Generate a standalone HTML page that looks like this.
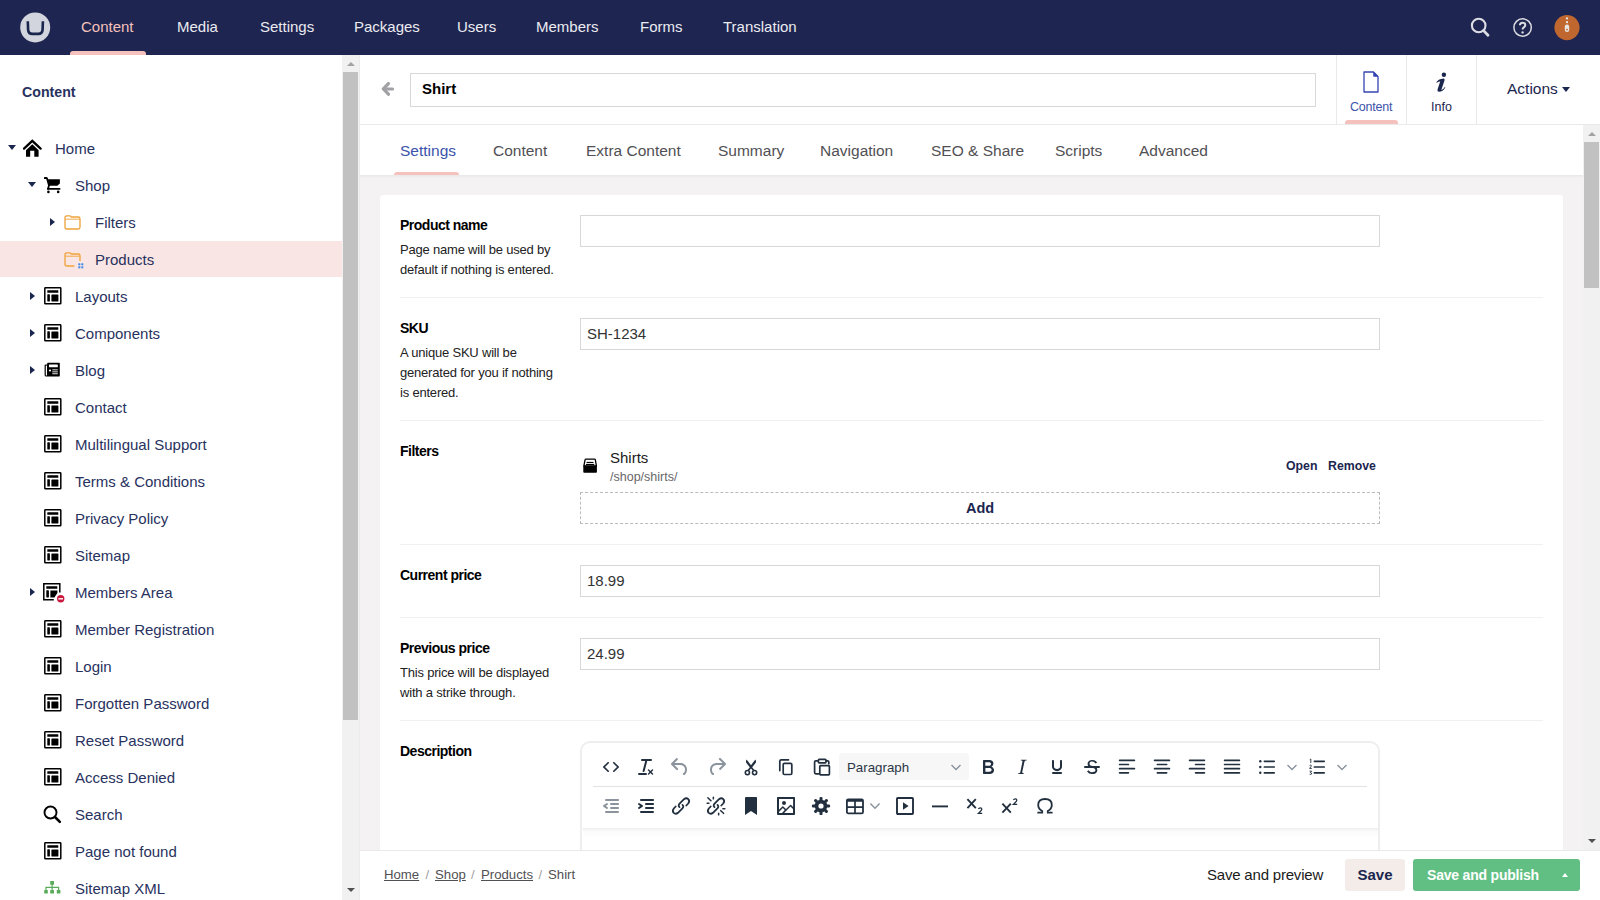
<!DOCTYPE html><html><head><meta charset="utf-8"><style>
*{box-sizing:border-box}
html,body{margin:0;padding:0}
body{width:1600px;height:900px;overflow:hidden;position:relative;background:#fff;font-family:"Liberation Sans",sans-serif;color:#1b264f}
.a{position:absolute}
.nav{position:absolute;top:18px;font-size:15px;color:#ebebf0;white-space:nowrap;line-height:18px}
.tt{position:absolute;font-size:15px;line-height:18px;color:#28325e;white-space:nowrap}
.cd{position:absolute;width:0;height:0;border-left:4px solid transparent;border-right:4px solid transparent;border-top:5px solid #1b264f}
.cr{position:absolute;width:0;height:0;border-top:4px solid transparent;border-bottom:4px solid transparent;border-left:5px solid #1b264f}
.tab{position:absolute;top:142px;font-size:15.5px;line-height:18px;color:#515054;white-space:nowrap}
.div{position:absolute;left:400px;width:1143px;height:1px;background:#f0eff1}
.lbl{position:absolute;left:400px;font-size:14px;letter-spacing:-0.5px;font-weight:bold;color:#000;line-height:18px;white-space:nowrap}
.desc{position:absolute;left:400px;font-size:13px;letter-spacing:-0.2px;line-height:20px;color:#222;white-space:nowrap}
.inp{position:absolute;left:580px;width:800px;height:32px;border:1px solid #d8d7d9;background:#fff}
.inp span{position:absolute;left:6px;top:6px;font-size:15px;line-height:18px;color:#333}
svg{display:block}
</style></head><body>
<div class="a" style="left:0;top:0;width:1600px;height:55px;background:#1e2550"></div>
<svg class="a" style="left:20px;top:12px" width="31" height="31" viewBox="0 0 31 31"><circle cx="15.2" cy="15.4" r="15" fill="#d2d5dd"/><path d="M7.8 9.3 L8.1 17.6 Q8.3 21.85 12.4 21.85 H18.3 Q22.4 21.85 22.6 17.6 L22.9 9.3" fill="none" stroke="#1b264f" stroke-width="2.6"/></svg>
<div class="a" style="left:70px;top:51px;width:76px;height:4px;background:#f5c1bc;border-radius:3px 3px 0 0"></div>
<div class="nav" style="left:81px;color:#f5c1bc">Content</div>
<div class="nav" style="left:177px;">Media</div>
<div class="nav" style="left:260px;">Settings</div>
<div class="nav" style="left:354px;">Packages</div>
<div class="nav" style="left:457px;">Users</div>
<div class="nav" style="left:536px;">Members</div>
<div class="nav" style="left:640px;">Forms</div>
<div class="nav" style="left:723px;">Translation</div>
<svg class="a" style="left:1469px;top:16px" width="22" height="23" viewBox="0 0 22 23"><circle cx="9.7" cy="9.5" r="6.8" fill="none" stroke="#dcdde3" stroke-width="2.1"/><path d="M14.6 14.6 L19 19.2" stroke="#dcdde3" stroke-width="2.8" stroke-linecap="round"/></svg>
<svg class="a" style="left:1511px;top:16px" width="23" height="23" viewBox="0 0 23 23"><circle cx="11.6" cy="11.5" r="8.7" fill="none" stroke="#dcdde3" stroke-width="1.5"/><path d="M8.9 9.3 Q8.9 6.7 11.6 6.7 Q14.3 6.7 14.3 9 Q14.3 10.4 12.8 11.3 Q11.6 12 11.6 13.6" fill="none" stroke="#dcdde3" stroke-width="2"/><circle cx="11.6" cy="16.4" r="1.2" fill="#dcdde3"/></svg>
<svg class="a" style="left:1554px;top:15px" width="26" height="26" viewBox="0 0 26 26"><circle cx="13" cy="12.6" r="12.6" fill="#c0672f"/><circle cx="13" cy="3.4" r="1.15" fill="#e8e4e4"/><circle cx="13" cy="7.2" r="1.15" fill="#e8e4e4"/><rect x="10.8" y="9.6" width="4.4" height="7.4" rx="2.2" fill="#e8e4e4"/><circle cx="13" cy="14.6" r="0.95" fill="#c0672f"/></svg>
<div class="tt" style="left:22px;top:83px;font-weight:bold;font-size:14.2px">Content</div>
<div class="a" style="left:0;top:241px;width:342px;height:36px;background:#f9e5e3"></div>
<div class="tt" style="left:55px;top:140px">Home</div>
<div class="cd" style="left:8px;top:145px"></div>
<svg class="a" style="left:23px;top:139px" width="19" height="19" viewBox="0 0 19 19"><path d="M1 9.6 L9.3 1.8 L17.6 9.6" fill="none" stroke="#000" stroke-width="2.3" stroke-linecap="round"/><path d="M3 11.2 L9.3 5.2 L15.6 11.2 V17.4 Q15.6 17.8 15.2 17.8 H11.3 V11.8 H7.2 V17.8 H3.4 Q3 17.8 3 17.4Z" fill="#000"/></svg>
<div class="tt" style="left:75px;top:177px">Shop</div>
<div class="cd" style="left:28px;top:182px"></div>
<svg class="a" style="left:44px;top:177px" width="17" height="17" viewBox="0 0 17 17"><path d="M0.6 1 H2.2 Q2.9 1 3.1 1.7 L5 8.5 L4 11.8" fill="none" stroke="#000" stroke-width="1.8" stroke-linejoin="round" stroke-linecap="round"/><path d="M3.6 2.2 H15.9 V6.5 L13.3 8.7 H5.1Z" fill="#000"/><path d="M4 11.9 H15.6" stroke="#000" stroke-width="1.7" stroke-linecap="round"/><circle cx="4.4" cy="14.9" r="1.3" fill="#000"/><circle cx="14.2" cy="14.9" r="1.3" fill="#000"/></svg>
<div class="tt" style="left:95px;top:214px">Filters</div>
<div class="cr" style="left:49.5px;top:218px"></div>
<svg class="a" style="left:64px;top:215px" width="17" height="15" viewBox="0 0 17 15"><path d="M1 3 Q1 0.8 2.8 0.8 H6 Q6.9 0.8 7.3 2 H14.2 Q16 2 16 3.8 V12.2 Q16 14 14.2 14 H2.8 Q1 14 1 12.2Z" fill="none" stroke="#f0a23a" stroke-width="1.3"/><path d="M1.2 4.2 H15.8" stroke="#f0a23a" stroke-width="0.9"/></svg>
<div class="tt" style="left:95px;top:251px">Products</div>
<svg class="a" style="left:64px;top:252px" width="21" height="18" viewBox="0 0 21 18"><path d="M10.4 14 H2.8 Q1 14 1 12.2 V3 Q1 0.8 2.8 0.8 H6 Q6.9 0.8 7.3 2 H14.2 Q16 2 16 3.8 V9" fill="none" stroke="#f0a23a" stroke-width="1.3"/><path d="M1.2 4.2 H15.8" stroke="#f0a23a" stroke-width="0.9"/><rect x="14.3" y="11.3" width="2" height="2" fill="#3f8be8"/><rect x="17.3" y="11.3" width="2" height="2" fill="#3f8be8"/><rect x="14.3" y="14.3" width="2" height="2" fill="#3f8be8"/><rect x="17.3" y="14.3" width="2" height="2" fill="#3f8be8"/></svg>
<div class="tt" style="left:75px;top:288px">Layouts</div>
<div class="cr" style="left:29.5px;top:292px"></div>
<svg class="a" style="left:43.5px;top:287px" width="18" height="18" viewBox="0 0 18 18"><rect x="0.8" y="0.8" width="16" height="16" rx="0.6" fill="none" stroke="#000" stroke-width="1.5"/><rect x="3.3" y="3.2" width="11" height="2.6" rx="0.4" fill="#000"/><rect x="3.3" y="7.3" width="2.6" height="7.2" rx="0.4" fill="#000"/><rect x="7.4" y="7.5" width="7" height="7" rx="0.4" fill="#000"/></svg>
<div class="tt" style="left:75px;top:325px">Components</div>
<div class="cr" style="left:29.5px;top:329px"></div>
<svg class="a" style="left:43.5px;top:324px" width="18" height="18" viewBox="0 0 18 18"><rect x="0.8" y="0.8" width="16" height="16" rx="0.6" fill="none" stroke="#000" stroke-width="1.5"/><rect x="3.3" y="3.2" width="11" height="2.6" rx="0.4" fill="#000"/><rect x="3.3" y="7.3" width="2.6" height="7.2" rx="0.4" fill="#000"/><rect x="7.4" y="7.5" width="7" height="7" rx="0.4" fill="#000"/></svg>
<div class="tt" style="left:75px;top:362px">Blog</div>
<div class="cr" style="left:29.5px;top:366px"></div>
<svg class="a" style="left:44px;top:362px" width="17" height="16" viewBox="0 0 17 16"><path d="M3.2 2.5 H1.5 Q0.6 2.5 0.6 3.5 V13 Q0.6 14.6 2.2 14.6 H14.6 Q15.8 14.6 15.8 13.4 V1.2 Q15.8 0.7 15.2 0.7 H3.8 Q3.2 0.7 3.2 1.3Z" fill="#000"/><rect x="1.8" y="3.6" width="1.2" height="9.8" fill="#fff"/><rect x="5" y="2.4" width="8.8" height="2.8" rx="0.5" fill="#fff"/><circle cx="6" cy="8.5" r="1.1" fill="#fff"/><rect x="8.3" y="7.4" width="5.5" height="0.9" fill="#fff"/><rect x="8.3" y="9.4" width="5.5" height="0.9" fill="#fff"/><rect x="8.3" y="11.3" width="5.5" height="0.9" fill="#fff"/></svg>
<div class="tt" style="left:75px;top:399px">Contact</div>
<svg class="a" style="left:43.5px;top:398px" width="18" height="18" viewBox="0 0 18 18"><rect x="0.8" y="0.8" width="16" height="16" rx="0.6" fill="none" stroke="#000" stroke-width="1.5"/><rect x="3.3" y="3.2" width="11" height="2.6" rx="0.4" fill="#000"/><rect x="3.3" y="7.3" width="2.6" height="7.2" rx="0.4" fill="#000"/><rect x="7.4" y="7.5" width="7" height="7" rx="0.4" fill="#000"/></svg>
<div class="tt" style="left:75px;top:436px">Multilingual Support</div>
<svg class="a" style="left:43.5px;top:435px" width="18" height="18" viewBox="0 0 18 18"><rect x="0.8" y="0.8" width="16" height="16" rx="0.6" fill="none" stroke="#000" stroke-width="1.5"/><rect x="3.3" y="3.2" width="11" height="2.6" rx="0.4" fill="#000"/><rect x="3.3" y="7.3" width="2.6" height="7.2" rx="0.4" fill="#000"/><rect x="7.4" y="7.5" width="7" height="7" rx="0.4" fill="#000"/></svg>
<div class="tt" style="left:75px;top:473px">Terms &amp; Conditions</div>
<svg class="a" style="left:43.5px;top:472px" width="18" height="18" viewBox="0 0 18 18"><rect x="0.8" y="0.8" width="16" height="16" rx="0.6" fill="none" stroke="#000" stroke-width="1.5"/><rect x="3.3" y="3.2" width="11" height="2.6" rx="0.4" fill="#000"/><rect x="3.3" y="7.3" width="2.6" height="7.2" rx="0.4" fill="#000"/><rect x="7.4" y="7.5" width="7" height="7" rx="0.4" fill="#000"/></svg>
<div class="tt" style="left:75px;top:510px">Privacy Policy</div>
<svg class="a" style="left:43.5px;top:509px" width="18" height="18" viewBox="0 0 18 18"><rect x="0.8" y="0.8" width="16" height="16" rx="0.6" fill="none" stroke="#000" stroke-width="1.5"/><rect x="3.3" y="3.2" width="11" height="2.6" rx="0.4" fill="#000"/><rect x="3.3" y="7.3" width="2.6" height="7.2" rx="0.4" fill="#000"/><rect x="7.4" y="7.5" width="7" height="7" rx="0.4" fill="#000"/></svg>
<div class="tt" style="left:75px;top:547px">Sitemap</div>
<svg class="a" style="left:43.5px;top:546px" width="18" height="18" viewBox="0 0 18 18"><rect x="0.8" y="0.8" width="16" height="16" rx="0.6" fill="none" stroke="#000" stroke-width="1.5"/><rect x="3.3" y="3.2" width="11" height="2.6" rx="0.4" fill="#000"/><rect x="3.3" y="7.3" width="2.6" height="7.2" rx="0.4" fill="#000"/><rect x="7.4" y="7.5" width="7" height="7" rx="0.4" fill="#000"/></svg>
<div class="tt" style="left:75px;top:584px">Members Area</div>
<div class="cr" style="left:29.5px;top:588px"></div>
<svg class="a" style="left:43px;top:583px" width="24" height="22" viewBox="0 0 24 22"><path d="M10.8 16.8 H0.8 V0.8 H16.8 V9.5" fill="none" stroke="#000" stroke-width="1.5"/><rect x="3.3" y="3.2" width="11" height="2.6" rx="0.4" fill="#000"/><rect x="3.3" y="7.3" width="2.6" height="7.2" rx="0.4" fill="#000"/><path d="M7.4 7.5 H14.4 V10 L11.4 14.5 H7.4Z" fill="#000"/><circle cx="17.7" cy="15.8" r="3.7" fill="#c8193f"/><rect x="15.4" y="15.1" width="4.6" height="1.4" fill="#fff"/></svg>
<div class="tt" style="left:75px;top:621px">Member Registration</div>
<svg class="a" style="left:43.5px;top:620px" width="18" height="18" viewBox="0 0 18 18"><rect x="0.8" y="0.8" width="16" height="16" rx="0.6" fill="none" stroke="#000" stroke-width="1.5"/><rect x="3.3" y="3.2" width="11" height="2.6" rx="0.4" fill="#000"/><rect x="3.3" y="7.3" width="2.6" height="7.2" rx="0.4" fill="#000"/><rect x="7.4" y="7.5" width="7" height="7" rx="0.4" fill="#000"/></svg>
<div class="tt" style="left:75px;top:658px">Login</div>
<svg class="a" style="left:43.5px;top:657px" width="18" height="18" viewBox="0 0 18 18"><rect x="0.8" y="0.8" width="16" height="16" rx="0.6" fill="none" stroke="#000" stroke-width="1.5"/><rect x="3.3" y="3.2" width="11" height="2.6" rx="0.4" fill="#000"/><rect x="3.3" y="7.3" width="2.6" height="7.2" rx="0.4" fill="#000"/><rect x="7.4" y="7.5" width="7" height="7" rx="0.4" fill="#000"/></svg>
<div class="tt" style="left:75px;top:695px">Forgotten Password</div>
<svg class="a" style="left:43.5px;top:694px" width="18" height="18" viewBox="0 0 18 18"><rect x="0.8" y="0.8" width="16" height="16" rx="0.6" fill="none" stroke="#000" stroke-width="1.5"/><rect x="3.3" y="3.2" width="11" height="2.6" rx="0.4" fill="#000"/><rect x="3.3" y="7.3" width="2.6" height="7.2" rx="0.4" fill="#000"/><rect x="7.4" y="7.5" width="7" height="7" rx="0.4" fill="#000"/></svg>
<div class="tt" style="left:75px;top:732px">Reset Password</div>
<svg class="a" style="left:43.5px;top:731px" width="18" height="18" viewBox="0 0 18 18"><rect x="0.8" y="0.8" width="16" height="16" rx="0.6" fill="none" stroke="#000" stroke-width="1.5"/><rect x="3.3" y="3.2" width="11" height="2.6" rx="0.4" fill="#000"/><rect x="3.3" y="7.3" width="2.6" height="7.2" rx="0.4" fill="#000"/><rect x="7.4" y="7.5" width="7" height="7" rx="0.4" fill="#000"/></svg>
<div class="tt" style="left:75px;top:769px">Access Denied</div>
<svg class="a" style="left:43.5px;top:768px" width="18" height="18" viewBox="0 0 18 18"><rect x="0.8" y="0.8" width="16" height="16" rx="0.6" fill="none" stroke="#000" stroke-width="1.5"/><rect x="3.3" y="3.2" width="11" height="2.6" rx="0.4" fill="#000"/><rect x="3.3" y="7.3" width="2.6" height="7.2" rx="0.4" fill="#000"/><rect x="7.4" y="7.5" width="7" height="7" rx="0.4" fill="#000"/></svg>
<div class="tt" style="left:75px;top:806px">Search</div>
<svg class="a" style="left:43px;top:805px" width="19" height="19" viewBox="0 0 19 19"><circle cx="7.5" cy="7.5" r="6" fill="none" stroke="#000" stroke-width="1.9"/><path d="M12 12 L16.8 16.8" stroke="#000" stroke-width="2.6" stroke-linecap="round"/></svg>
<div class="tt" style="left:75px;top:843px">Page not found</div>
<svg class="a" style="left:43.5px;top:842px" width="18" height="18" viewBox="0 0 18 18"><rect x="0.8" y="0.8" width="16" height="16" rx="0.6" fill="none" stroke="#000" stroke-width="1.5"/><rect x="3.3" y="3.2" width="11" height="2.6" rx="0.4" fill="#000"/><rect x="3.3" y="7.3" width="2.6" height="7.2" rx="0.4" fill="#000"/><rect x="7.4" y="7.5" width="7" height="7" rx="0.4" fill="#000"/></svg>
<div class="tt" style="left:75px;top:880px">Sitemap XML</div>
<svg class="a" style="left:44px;top:881px" width="17" height="13" viewBox="0 0 17 13"><rect x="6.2" y="-0.1" width="3.8" height="3.9" rx="0.6" fill="#59ab59"/><rect x="0.2" y="8.9" width="3.6" height="3.7" rx="0.6" fill="#59ab59"/><rect x="6.2" y="8.9" width="3.8" height="3.7" rx="0.6" fill="#59ab59"/><rect x="12.8" y="8.9" width="3.6" height="3.7" rx="0.6" fill="#59ab59"/><path d="M8.1 3 V9 M2 9.2 V6.4 H14.6 V9.2" fill="none" stroke="#59ab59" stroke-width="1.2"/></svg>
<div class="a" style="left:342px;top:55px;width:17px;height:845px;background:#f1f1f1"></div>
<div class="a" style="left:343px;top:72px;width:15px;height:648px;background:#c1c1c1"></div>
<div class="a" style="left:346.5px;top:61.5px;width:0;height:0;border-left:4px solid transparent;border-right:4px solid transparent;border-bottom:4.5px solid #a3a3a3"></div>
<div class="a" style="left:346.5px;top:887.5px;width:0;height:0;border-left:4px solid transparent;border-right:4px solid transparent;border-top:4.5px solid #505050"></div>
<div class="a" style="left:359px;top:55px;width:1px;height:845px;background:#ebebeb"></div>
<div class="a" style="left:360px;top:55px;width:1240px;height:70px;background:#fff;border-bottom:1px solid #e9e9eb"></div>
<svg class="a" style="left:381px;top:81px" width="15" height="15" viewBox="0 0 15 15"><path d="M7.4 2.6 L2.4 7.9 L7.4 13.2" fill="none" stroke="#a2a1a6" stroke-width="3.3" stroke-linejoin="round" stroke-linecap="round"/><path d="M3.2 7.9 H11.6" stroke="#a2a1a6" stroke-width="3" stroke-linecap="round"/></svg>
<div class="a" style="left:410px;top:73px;width:906px;height:34px;border:1px solid #d8d7d9;background:#fff"></div>
<div class="a" style="left:422px;top:80px;font-size:15px;font-weight:bold;color:#000;line-height:18px">Shirt</div>
<div class="a" style="left:1336px;top:55px;width:1px;height:69px;background:#e9e9eb"></div>
<div class="a" style="left:1406px;top:55px;width:1px;height:69px;background:#e9e9eb"></div>
<div class="a" style="left:1476px;top:55px;width:1px;height:69px;background:#e9e9eb"></div>
<svg class="a" style="left:1363px;top:71px" width="16" height="22" viewBox="0 0 16 22"><path d="M1 1 H10.5 L15 5.5 V21 H1Z" fill="none" stroke="#3544b1" stroke-width="1.3" stroke-linejoin="round"/><path d="M10.5 1 V5.5 H15" fill="#3544b1"/><path d="M10.5 1 L15 5.5 H10.5Z" fill="#3544b1"/></svg>
<div class="a" style="left:1350px;top:100px;font-size:12.5px;line-height:15px;color:#3b53aa;letter-spacing:-0.2px">Content</div>
<div class="a" style="left:1345px;top:120px;width:53px;height:4px;background:#f5c1bc;border-radius:3px 3px 0 0"></div>
<svg class="a" style="left:1430px;top:70px" width="20" height="25" viewBox="0 0 20 25"><circle cx="13.9" cy="4.7" r="2.2" fill="#1b264f"/><path d="M6.3 12.2 Q8.8 9 13.4 8.6 Q15 8.5 14.5 10.4 L11.3 20 Q13.4 19.4 14.8 17 L15.3 17.5 Q12.8 21.8 9 21.8 Q7 21.8 7.5 19.6 L10.2 11.4 Q8.4 11.4 6.9 12.8Z" fill="#1b264f"/></svg>
<div class="a" style="left:1431px;top:100px;font-size:12.5px;line-height:15px;color:#1b264f">Info</div>
<div class="a" style="left:1507px;top:80px;font-size:15.5px;line-height:18px;color:#1b264f">Actions</div>
<div class="cd" style="left:1562px;top:87px"></div>
<div class="a" style="left:394px;top:172px;width:65px;height:4px;background:#f5c1bc;border-radius:3px 3px 0 0"></div>
<div class="tab" style="left:400px;color:#3b53aa">Settings</div>
<div class="tab" style="left:493px;">Content</div>
<div class="tab" style="left:586px;">Extra Content</div>
<div class="tab" style="left:718px;">Summary</div>
<div class="tab" style="left:820px;">Navigation</div>
<div class="tab" style="left:931px;">SEO &amp; Share</div>
<div class="tab" style="left:1055px;">Scripts</div>
<div class="tab" style="left:1139px;">Advanced</div>
<div class="a" style="left:360px;top:175px;width:1223px;height:675px;background:#f4f2f3"></div>
<div class="a" style="left:360px;top:175px;width:1223px;height:3px;background:linear-gradient(rgba(0,0,0,.05),rgba(0,0,0,0))"></div>
<div class="a" style="left:380px;top:195px;width:1183px;height:700px;background:#fff;border-radius:3px;box-shadow:0 1px 1px rgba(0,0,0,.06)"></div>
<div class="lbl" style="top:216px">Product name</div>
<div class="desc" style="top:240px">Page name will be used by</div>
<div class="desc" style="top:260px">default if nothing is entered.</div>
<div class="inp" style="top:215px"><span></span></div>
<div class="div" style="top:297px"></div>
<div class="lbl" style="top:319px">SKU</div>
<div class="desc" style="top:343px">A unique SKU will be</div>
<div class="desc" style="top:363px">generated for you if nothing</div>
<div class="desc" style="top:383px">is entered.</div>
<div class="inp" style="top:318px"><span>SH-1234</span></div>
<div class="div" style="top:420px"></div>
<div class="lbl" style="top:442px">Filters</div>
<svg class="a" style="left:583px;top:458px" width="15" height="16" viewBox="0 0 15 16"><path d="M2.1 1.7 Q2.2 1.1 2.9 1.1 H11.5 Q12.2 1.1 12.3 1.7 L13.4 7.9 H0.9Z" fill="none" stroke="#000" stroke-width="1.3"/><rect x="3.6" y="3.9" width="6.9" height="1.1" fill="#000"/><rect x="2.9" y="5.9" width="8.4" height="1.1" fill="#000"/><path d="M0.3 7.7 H13.9 V14 Q13.9 14.8 13.1 14.8 H1.1 Q0.3 14.8 0.3 14Z" fill="#000"/></svg>
<div class="a" style="left:610px;top:449px;font-size:15px;line-height:18px;color:#1b1b1b">Shirts</div>
<div class="a" style="left:610px;top:469.5px;font-size:12.5px;line-height:15px;color:#68676b">/shop/shirts/</div>
<div class="a" style="left:1286px;top:459px;font-size:12.3px;font-weight:bold;line-height:15px;color:#1b264f">Open</div>
<div class="a" style="left:1328px;top:459px;font-size:12.3px;font-weight:bold;line-height:15px;color:#1b264f">Remove</div>
<div class="a" style="left:580px;top:492px;width:800px;height:32px;border:1px dashed #bbbbbb"></div>
<div class="a" style="left:580px;top:499px;width:800px;text-align:center;font-size:14.5px;font-weight:bold;line-height:18px;color:#1b264f">Add</div>
<div class="div" style="top:544px"></div>
<div class="lbl" style="top:566px">Current price</div>
<div class="inp" style="top:565px"><span>18.99</span></div>
<div class="div" style="top:617px"></div>
<div class="lbl" style="top:639px">Previous price</div>
<div class="desc" style="top:663px">This price will be displayed</div>
<div class="desc" style="top:683px">with a strike through.</div>
<div class="inp" style="top:638px"><span>24.99</span></div>
<div class="div" style="top:720px"></div>
<div class="lbl" style="top:742px">Description</div>
<div class="a" style="left:580px;top:741px;width:800px;height:200px;border:2px solid #eeeeee;border-radius:10px;background:#fff"></div>
<div class="a" style="left:593px;top:786px;width:774px;height:1px;background:#e3e3e3"></div>
<div class="a" style="left:583px;top:828px;width:795px;height:10px;background:linear-gradient(rgba(0,0,0,.07),rgba(0,0,0,.02) 30%,rgba(0,0,0,0))"></div>
<svg class="a" style="left:599.0px;top:754.5px" width="24" height="24" viewBox="0 0 24 24"><path d="M9.8 15.7c.3.3.3.8 0 1-.3.4-.9.4-1.2 0l-4.4-4.1a.8.8 0 0 1 0-1.2l4.4-4.2c.3-.3.9-.3 1.2 0 .3.3.3.8 0 1.1L6 12l3.8 3.7ZM14.2 15.7c-.3.3-.3.8 0 1 .4.4.9.4 1.2 0l4.4-4.1c.3-.3.3-.9 0-1.2l-4.4-4.2a.8.8 0 0 0-1.2 0c-.3.3-.3.8 0 1.1L18 12l-3.8 3.7Z" fill="#222f3e"/></svg>
<svg class="a" style="left:634.0px;top:754.5px" width="24" height="24" viewBox="0 0 24 24"><path d="M13.2 6a1 1 0 0 1 0 .2l-2.6 10a1 1 0 0 1-1 .8h-.2a.8.8 0 0 1-.8-1l2.6-10H8a1 1 0 1 1 0-2h9a1 1 0 0 1 0 2h-3.8ZM5 18h7a1 1 0 0 1 0 2H5a1 1 0 0 1 0-2Zm13 1.5L16.5 18 15 19.5a.7.7 0 0 1-1-1l1.5-1.5-1.5-1.5a.7.7 0 0 1 1-1l1.5 1.5 1.5-1.5a.7.7 0 0 1 1 1L17.5 17l1.5 1.5a.7.7 0 0 1-1 1Z" fill="#222f3e"/></svg>
<svg class="a" style="left:668.0px;top:754.5px" width="24" height="24" viewBox="0 0 24 24"><path d="M6.4 8H12c3.7 0 6.2 2 6.8 5.1.6 2.7-.4 5.6-2.3 6.8a1 1 0 0 1-1-1.8c1.1-.6 1.8-2.7 1.4-4.6-.5-2.1-2.1-3.5-4.9-3.5H6.4l3.3 3.3a1 1 0 1 1-1.4 1.4l-5-5a1 1 0 0 1 0-1.4l5-5a1 1 0 0 1 1.4 1.4L6.4 8Z" fill="#8b939c"/></svg>
<svg class="a" style="left:704.5px;top:754.5px" width="24" height="24" viewBox="0 0 24 24"><path d="M17.6 10H12c-2.8 0-4.4 1.4-4.9 3.5-.4 2 .3 4 1.4 4.6a1 1 0 1 1-1 1.8c-2-1.2-2.9-4.1-2.3-6.8.6-3 3-5.1 6.8-5.1h5.6l-3.3-3.3a1 1 0 1 1 1.4-1.4l5 5a1 1 0 0 1 0 1.4l-5 5a1 1 0 0 1-1.4-1.4l3.3-3.3Z" fill="#8b939c"/></svg>
<svg class="a" style="left:739.0px;top:754.5px" width="24" height="24" viewBox="0 0 24 24"><path d="M7.6 4.4 L12 10.2 L16.4 4.4 Q17.6 6.4 16.6 8 L13.2 12.2 L15.6 15.2 L14.4 16.2 L12 13.4 L9.6 16.2 L8.4 15.2 L10.8 12.2 L7.4 8 Q6.4 6.4 7.6 4.4Z" fill="#222f3e"/><circle cx="8.4" cy="17.6" r="2.1" fill="none" stroke="#222f3e" stroke-width="1.6"/><circle cx="15.6" cy="17.6" r="2.1" fill="none" stroke="#222f3e" stroke-width="1.6"/></svg>
<svg class="a" style="left:773.5px;top:754.5px" width="24" height="24" viewBox="0 0 24 24"><path d="M5.8 15.6 V6.2 Q5.8 4.8 7.2 4.8 H14.5" fill="none" stroke="#222f3e" stroke-width="1.7" stroke-linecap="round" stroke-linejoin="round" stroke-width="1.8" stroke-linecap="butt"/><rect x="9.2" y="8.3" width="8.6" height="11.2" rx="1.2" fill="none" stroke="#222f3e" stroke-width="1.7" stroke-linecap="round" stroke-linejoin="round" stroke-width="1.8"/></svg>
<svg class="a" style="left:809.5px;top:754.5px" width="24" height="24" viewBox="0 0 24 24"><path d="M7.5 5.8 H5.8 Q4.6 5.8 4.6 7 V17.6 Q4.6 18.8 5.8 18.8 H8.6" fill="none" stroke="#222f3e" stroke-width="1.7" stroke-linecap="round" stroke-linejoin="round" stroke-width="1.8"/><path d="M16 5.8 H17.6 Q18.8 5.8 18.8 7 V8.8" fill="none" stroke="#222f3e" stroke-width="1.7" stroke-linecap="round" stroke-linejoin="round" stroke-width="1.8"/><rect x="8.4" y="4.4" width="7.6" height="3.4" rx="0.8" fill="none" stroke="#222f3e" stroke-width="1.7" stroke-linecap="round" stroke-linejoin="round" stroke-width="1.6"/><rect x="9.8" y="10.6" width="9.6" height="9.2" rx="0.8" fill="none" stroke="#222f3e" stroke-width="1.7" stroke-linecap="round" stroke-linejoin="round" stroke-width="1.8"/></svg>
<div class="a" style="left:839px;top:753px;width:130px;height:27px;background:#f7f7f7;border-radius:3px"></div>
<div class="a" style="left:847px;top:759px;font-size:13.3px;line-height:18px;color:#2b3646;letter-spacing:0px">Paragraph</div>
<svg class="a" style="left:944.0px;top:754.5px" width="24" height="24" viewBox="0 0 24 24"><path d="M7.5 10 L12 14.5 L16.5 10" fill="none" stroke="#8b939c" stroke-width="1.4"/></svg>
<svg class="a" style="left:975.5px;top:754.5px" width="24" height="24" viewBox="0 0 24 24"><path d="M7.8 19c-.3 0-.5 0-.6-.2l-.2-.5V5.7c0-.2 0-.4.2-.5l.6-.2h5c1.5 0 2.7.3 3.5 1 .7.6 1.1 1.4 1.1 2.5a3 3 0 0 1-.6 1.9c-.4.6-1 1-1.6 1.2.4.1.9.3 1.3.6s.8.7 1 1.2c.4.4.5 1 .5 1.6 0 1.3-.4 2.3-1.3 3-.8.7-2.1 1-3.8 1H7.8Zm5-8.3c.6 0 1.2-.1 1.6-.5.4-.3.6-.7.6-1.3 0-1.1-.8-1.7-2.3-1.7H9.3v3.5h3.4Zm.5 6c.7 0 1.3-.1 1.7-.4.4-.4.6-.9.6-1.5s-.2-1-.7-1.4c-.4-.3-1-.4-2-.4H9.4v3.8h4Z" fill="#222f3e"/></svg>
<svg class="a" style="left:1010.0px;top:754.5px" width="24" height="24" viewBox="0 0 24 24"><path d="m16.7 4.7-.1.9h-.3c-.6 0-1 0-1.4.3-.3.3-.4.6-.5 1.1l-2.1 9.8v.6c0 .5.4.8 1.4.8h.2l-.2.8H8l.2-.8h.2c1.1 0 1.8-.5 2-1.5l2-9.8.1-.5c0-.6-.4-.8-1.4-.8h-.3l.2-.9h5.8Z" fill="#222f3e"/></svg>
<svg class="a" style="left:1045.0px;top:754.5px" width="24" height="24" viewBox="0 0 24 24"><path d="M16 5c.6 0 1 .4 1 1v5.5a4 4 0 0 1-.4 1.8l-1 1.4a5.3 5.3 0 0 1-5.5 1 5 5 0 0 1-1.6-1c-.5-.4-.8-.9-1.1-1.4a4 4 0 0 1-.4-1.8V6c0-.6.4-1 1-1s1 .4 1 1v5.5c0 .3 0 .6.2 1l.6.7a3.3 3.3 0 0 0 2.2.8 3.4 3.4 0 0 0 2.2-.8c.3-.2.4-.5.6-.8l.2-.9V6c0-.6.4-1 1-1ZM8 17h8c.6 0 1 .4 1 1s-.4 1-1 1H8a1 1 0 0 1 0-2Z" fill="#222f3e"/></svg>
<svg class="a" style="left:1080.0px;top:754.5px" width="24" height="24" viewBox="0 0 24 24"><path d="M15.6 8.5c-.5-.7-1-1.1-1.3-1.3-.6-.4-1.3-.6-2-.6-2.7 0-2.8 1.7-2.8 2.1 0 1.6 1.8 2 3.2 2.3 4.4.9 4.6 2.8 4.6 3.9 0 1.4-.7 4.1-5 4.1A6.2 6.2 0 0 1 7 16.4l1.5-1.1c.4.6 1.6 2 3.7 2 1.6 0 2.5-.4 3-1.2.4-.8.3-2-.8-2.6-.7-.4-1.6-.7-2.9-1-1-.2-3.9-.8-3.9-3.6C7.6 6 10.3 5 12.4 5c2.9 0 4.2 1.6 4.7 2.4l-1.5 1.1ZM5 11h14a1 1 0 0 1 0 2H5a1 1 0 0 1 0-2Z" fill="#222f3e"/></svg>
<svg class="a" style="left:1115.0px;top:754.5px" width="24" height="24" viewBox="0 0 24 24"><path d="M4.6 5.3 H19.4" stroke="#222f3e" stroke-width="1.7" stroke-linecap="round"/><path d="M4.6 9.5 H13.4" stroke="#222f3e" stroke-width="1.7" stroke-linecap="round"/><path d="M4.6 13.7 H19.4" stroke="#222f3e" stroke-width="1.7" stroke-linecap="round"/><path d="M4.6 17.8 H13.4" stroke="#222f3e" stroke-width="1.7" stroke-linecap="round"/></svg>
<svg class="a" style="left:1150.0px;top:754.5px" width="24" height="24" viewBox="0 0 24 24"><path d="M4.6 5.3 H19.4" stroke="#222f3e" stroke-width="1.7" stroke-linecap="round"/><path d="M7.4 9.5 H16.6" stroke="#222f3e" stroke-width="1.7" stroke-linecap="round"/><path d="M4.6 13.7 H19.4" stroke="#222f3e" stroke-width="1.7" stroke-linecap="round"/><path d="M7.4 17.8 H16.6" stroke="#222f3e" stroke-width="1.7" stroke-linecap="round"/></svg>
<svg class="a" style="left:1185.0px;top:754.5px" width="24" height="24" viewBox="0 0 24 24"><path d="M4.6 5.3 H19.4" stroke="#222f3e" stroke-width="1.7" stroke-linecap="round"/><path d="M10.6 9.5 H19.4" stroke="#222f3e" stroke-width="1.7" stroke-linecap="round"/><path d="M4.6 13.7 H19.4" stroke="#222f3e" stroke-width="1.7" stroke-linecap="round"/><path d="M10.6 17.8 H19.4" stroke="#222f3e" stroke-width="1.7" stroke-linecap="round"/></svg>
<svg class="a" style="left:1220.0px;top:754.5px" width="24" height="24" viewBox="0 0 24 24"><path d="M4.6 5.3 H19.4" stroke="#222f3e" stroke-width="1.7" stroke-linecap="round"/><path d="M4.6 9.5 H19.4" stroke="#222f3e" stroke-width="1.7" stroke-linecap="round"/><path d="M4.6 13.7 H19.4" stroke="#222f3e" stroke-width="1.7" stroke-linecap="round"/><path d="M4.6 17.8 H19.4" stroke="#222f3e" stroke-width="1.7" stroke-linecap="round"/></svg>
<svg class="a" style="left:1255.0px;top:754.5px" width="24" height="24" viewBox="0 0 24 24"><circle cx="5.3" cy="6.3" r="1.2" fill="#222f3e"/><circle cx="5.3" cy="12" r="1.2" fill="#222f3e"/><circle cx="5.3" cy="17.8" r="1.2" fill="#222f3e"/><path d="M9.4 6.3 H19.2 M9.4 12 H19.2 M9.4 17.8 H19.2" stroke="#222f3e" stroke-width="1.7" stroke-linecap="round"/></svg>
<svg class="a" style="left:1280.0px;top:754.5px" width="24" height="24" viewBox="0 0 24 24"><path d="M7.5 10 L12 14.5 L16.5 10" fill="none" stroke="#8b939c" stroke-width="1.4"/></svg>
<svg class="a" style="left:1305.0px;top:754.5px" width="24" height="24" viewBox="0 0 24 24"><path d="M4.8 4.6 L5.8 4 V8" fill="none" stroke="#222f3e" stroke-width="0.9"/><path d="M4.6 10.6 Q5.4 9.8 6.2 10.3 Q6.8 10.9 4.6 13.4 H6.8" fill="none" stroke="#222f3e" stroke-width="0.9"/><path d="M4.6 16.2 H6.6 L5.4 17.6 Q7 17.8 6.6 19 Q6 19.8 4.6 19.2" fill="none" stroke="#222f3e" stroke-width="0.9"/><path d="M9.4 6.3 H19.2 M9.4 12 H19.2 M9.4 17.8 H19.2" stroke="#222f3e" stroke-width="1.7" stroke-linecap="round"/></svg>
<svg class="a" style="left:1330.0px;top:754.5px" width="24" height="24" viewBox="0 0 24 24"><path d="M7.5 10 L12 14.5 L16.5 10" fill="none" stroke="#8b939c" stroke-width="1.4"/></svg>
<svg class="a" style="left:599.0px;top:793.5px" width="24" height="24" viewBox="0 0 24 24"><path d="M7 5h12c.6 0 1 .4 1 1s-.4 1-1 1H7a1 1 0 1 1 0-2Zm5 4h7c.6 0 1 .4 1 1s-.4 1-1 1h-7a1 1 0 0 1 0-2Zm0 4h7c.6 0 1 .4 1 1s-.4 1-1 1h-7a1 1 0 0 1 0-2Zm-5 4h12a1 1 0 0 1 0 2H7a1 1 0 0 1 0-2ZM8.6 13.2a1 1 0 0 1-1.2 1.6l-3-2a1 1 0 0 1 0-1.6l3-2a1 1 0 0 1 1.2 1.6L6.8 12l1.8 1.2Z" fill="#8b939c"/></svg>
<svg class="a" style="left:634.0px;top:793.5px" width="24" height="24" viewBox="0 0 24 24"><path d="M7 5h12c.6 0 1 .4 1 1s-.4 1-1 1H7a1 1 0 1 1 0-2Zm5 4h7c.6 0 1 .4 1 1s-.4 1-1 1h-7a1 1 0 0 1 0-2Zm0 4h7c.6 0 1 .4 1 1s-.4 1-1 1h-7a1 1 0 0 1 0-2Zm-5 4h12a1 1 0 0 1 0 2H7a1 1 0 0 1 0-2ZM4.4 13.2 6.2 12l-1.8-1.2a1 1 0 0 1 1.2-1.6l3 2a1 1 0 0 1 0 1.6l-3 2a1 1 0 1 1-1.2-1.6Z" fill="#222f3e"/></svg>
<svg class="a" style="left:669.0px;top:793.5px" width="24" height="24" viewBox="0 0 24 24"><path d="M10.5 13.1 Q8.8 11.5 10.6 9.6 L15 5.2 Q17.3 3.3 19.3 5.1 Q21.1 7.2 19.2 9.5 L17.3 11.5 M13.5 10.9 Q15.2 12.5 13.4 14.4 L9 18.8 Q6.7 20.7 4.7 18.9 Q2.9 16.8 4.8 14.5 L6.7 12.5" fill="none" stroke="#222f3e" stroke-width="1.8" stroke-linecap="round"/></svg>
<svg class="a" style="left:703.5px;top:793.5px" width="24" height="24" viewBox="0 0 24 24"><path d="M10.5 13.1 Q8.8 11.5 10.6 9.6 L15 5.2 Q17.3 3.3 19.3 5.1 Q21.1 7.2 19.2 9.5 L17.3 11.5 M13.5 10.9 Q15.2 12.5 13.4 14.4 L9 18.8 Q6.7 20.7 4.7 18.9 Q2.9 16.8 4.8 14.5 L6.7 12.5" fill="none" stroke="#222f3e" stroke-width="1.8" stroke-linecap="round"/><path d="M7.6 6.3a.8.8 0 0 1-1 1.1L3.3 4.2a.7.7 0 1 1 1-1l3.2 3.1ZM5.1 8.6a.8.8 0 0 1 0 1.5H3a.8.8 0 0 1 0-1.5H5Zm5-3.5a.8.8 0 0 1-1.5 0V3a.8.8 0 0 1 1.5 0v2Zm6 11.8a.8.8 0 0 1 1-1l3.2 3.2a.8.8 0 0 1-1 1L16 17Zm-2.2 2a.8.8 0 0 1 1.5 0V21a.8.8 0 0 1-1.5 0V19Zm5-3.5a.7.7 0 1 1 0-1.5H21a.8.8 0 0 1 0 1.5H19Z" fill="#222f3e"/></svg>
<svg class="a" style="left:739.0px;top:793.5px" width="24" height="24" viewBox="0 0 24 24"><path d="M6 4v17l6-4 6 4V4c0-.6-.4-1-1-1H7a1 1 0 0 0-1 1Z" fill="#222f3e"/></svg>
<svg class="a" style="left:774.0px;top:793.5px" width="24" height="24" viewBox="0 0 24 24"><path d="m5 15.7 3.3-3.2c.3-.3.7-.3 1 0L12 15l4.1-4c.3-.4.8-.4 1 0l2 1.9V5H5v10.7ZM5 18V19h3l2.8-2.9-2-2L5 17.9Zm14-3-2.5-2.4-6.4 6.5H19v-4ZM4 3h16c.6 0 1 .4 1 1v16c0 .6-.4 1-1 1H4a1 1 0 0 1-1-1V4c0-.6.4-1 1-1Zm6 8a2 2 0 1 0 0-4 2 2 0 0 0 0 4Z" fill="#222f3e"/></svg>
<svg class="a" style="left:809.0px;top:793.5px" width="24" height="24" viewBox="0 0 24 24"><circle cx="12" cy="12" r="6.3" fill="#222f3e"/><circle cx="12" cy="12" r="2.6" fill="#fff"/><rect x="10.5" y="2.9" width="3" height="4.6" rx="1.2" fill="#222f3e" transform="rotate(0 12 12)"/><rect x="10.5" y="2.9" width="3" height="4.6" rx="1.2" fill="#222f3e" transform="rotate(45 12 12)"/><rect x="10.5" y="2.9" width="3" height="4.6" rx="1.2" fill="#222f3e" transform="rotate(90 12 12)"/><rect x="10.5" y="2.9" width="3" height="4.6" rx="1.2" fill="#222f3e" transform="rotate(135 12 12)"/><rect x="10.5" y="2.9" width="3" height="4.6" rx="1.2" fill="#222f3e" transform="rotate(180 12 12)"/><rect x="10.5" y="2.9" width="3" height="4.6" rx="1.2" fill="#222f3e" transform="rotate(225 12 12)"/><rect x="10.5" y="2.9" width="3" height="4.6" rx="1.2" fill="#222f3e" transform="rotate(270 12 12)"/><rect x="10.5" y="2.9" width="3" height="4.6" rx="1.2" fill="#222f3e" transform="rotate(315 12 12)"/></svg>
<svg class="a" style="left:843.0px;top:793.5px" width="24" height="24" viewBox="0 0 24 24"><rect x="3.9" y="5.3" width="16.1" height="14" rx="1.4" fill="none" stroke="#222f3e" stroke-width="1.8"/><path d="M4 6.8 H20 M4 13.2 H20 M12 7 V19" stroke="#222f3e" stroke-width="1.7"/></svg>
<svg class="a" style="left:863.0px;top:793.5px" width="24" height="24" viewBox="0 0 24 24"><path d="M7.4 9.6 L12 14.2 L16.6 9.6" fill="none" stroke="#8b939c" stroke-width="1.4"/></svg>
<svg class="a" style="left:893.0px;top:793.5px" width="24" height="24" viewBox="0 0 24 24"><rect x="4" y="4" width="16" height="16" rx="0.8" fill="none" stroke="#222f3e" stroke-width="1.9"/><path d="M10 8.2 L15.6 12 L10 15.8Z" fill="#222f3e"/></svg>
<svg class="a" style="left:928.0px;top:793.5px" width="24" height="24" viewBox="0 0 24 24"><path d="M4 12.4 H20" stroke="#222f3e" stroke-width="1.9"/></svg>
<svg class="a" style="left:963.0px;top:793.5px" width="24" height="24" viewBox="0 0 24 24"><path d="M4.4 5.2 L12.8 14.2 M12.8 5.2 L4.4 14.2" stroke="#222f3e" stroke-width="1.9"/><path d="M15.4 15 Q16 13.8 17.4 13.8 Q18.8 13.8 18.8 15.2 Q18.8 16.2 15.4 19.4 H19.2" fill="none" stroke="#222f3e" stroke-width="1.3"/></svg>
<svg class="a" style="left:998.0px;top:793.5px" width="24" height="24" viewBox="0 0 24 24"><path d="M4.4 9.6 L12.8 18.6 M12.8 9.6 L4.4 18.6" stroke="#222f3e" stroke-width="1.9"/><path d="M15.4 6 Q16 4.8 17.4 4.8 Q18.8 4.8 18.8 6.2 Q18.8 7.2 15.4 10.4 H19.2" fill="none" stroke="#222f3e" stroke-width="1.3"/></svg>
<svg class="a" style="left:1033.0px;top:793.5px" width="24" height="24" viewBox="0 0 24 24"><path d="M4.4 18.6 H9.2 V17 Q5.2 15 5.2 11 Q5.2 5 12 5 Q18.8 5 18.8 11 Q18.8 15 14.8 17 V18.6 H19.6" fill="none" stroke="#222f3e" stroke-width="1.8"/></svg>
<div class="a" style="left:1583px;top:125px;width:17px;height:725px;background:#f1f1f1"></div>
<div class="a" style="left:1584px;top:142px;width:15px;height:146px;background:#c1c1c1"></div>
<div class="a" style="left:1587.5px;top:131.5px;width:0;height:0;border-left:4px solid transparent;border-right:4px solid transparent;border-bottom:4.5px solid #a3a3a3"></div>
<div class="a" style="left:1587.5px;top:838.5px;width:0;height:0;border-left:4px solid transparent;border-right:4px solid transparent;border-top:4.5px solid #505050"></div>
<div class="a" style="left:360px;top:850px;width:1240px;height:50px;background:#fff;border-top:1px solid #e9e9eb"></div>
<div style="position:absolute;top:866px;font-size:13.2px;line-height:17px;color:#515054;white-space:nowrap;left:384px;text-decoration:underline">Home</div>
<div style="position:absolute;top:866px;font-size:13.2px;line-height:17px;color:#515054;white-space:nowrap;left:425.5px;color:#a2a1a6">/</div>
<div style="position:absolute;top:866px;font-size:13.2px;line-height:17px;color:#515054;white-space:nowrap;left:435px;text-decoration:underline">Shop</div>
<div style="position:absolute;top:866px;font-size:13.2px;line-height:17px;color:#515054;white-space:nowrap;left:471px;color:#a2a1a6">/</div>
<div style="position:absolute;top:866px;font-size:13.2px;line-height:17px;color:#515054;white-space:nowrap;left:481px;text-decoration:underline">Products</div>
<div style="position:absolute;top:866px;font-size:13.2px;line-height:17px;color:#515054;white-space:nowrap;left:538.5px;color:#a2a1a6">/</div>
<div style="position:absolute;top:866px;font-size:13.2px;line-height:17px;color:#515054;white-space:nowrap;left:548px">Shirt</div>
<div class="a" style="left:1207px;top:866px;font-size:15px;letter-spacing:-0.2px;line-height:18px;color:#1b1b1b;white-space:nowrap">Save and preview</div>
<div class="a" style="left:1345px;top:859px;width:60px;height:32px;background:#f3ece8;border-radius:3px"></div>
<div class="a" style="left:1345px;top:866px;width:60px;text-align:center;font-size:15px;font-weight:bold;line-height:18px;color:#1b264f">Save</div>
<div class="a" style="left:1413px;top:859px;width:167px;height:32px;background:#61bf83;border-radius:3px"></div>
<div class="a" style="left:1427px;top:866px;font-size:14px;letter-spacing:-0.2px;font-weight:bold;line-height:18px;color:#fff;white-space:nowrap">Save and publish</div>
<div class="a" style="left:1562px;top:873px;width:0;height:0;border-left:3.8px solid transparent;border-right:3.8px solid transparent;border-bottom:4.2px solid #fff"></div>
</body></html>
